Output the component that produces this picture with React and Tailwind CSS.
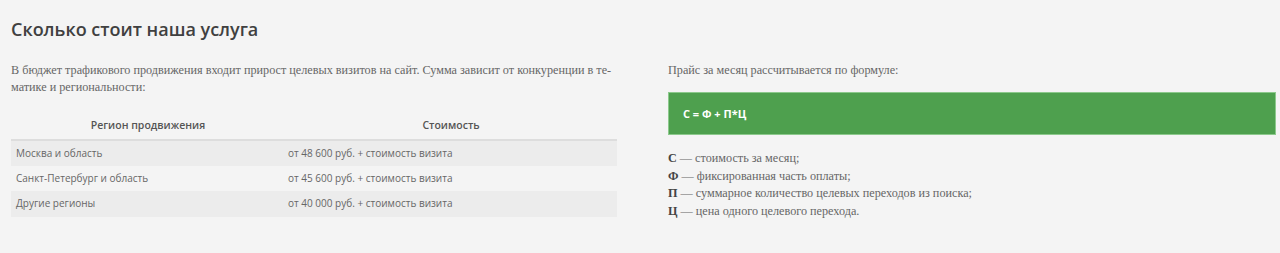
const rows = [
  { region: 'Москва и область', price: 'от 48 600 руб. + стоимость визита' },
  { region: 'Санкт-Петербург и область', price: 'от 45 600 руб. + стоимость визита' },
  { region: 'Другие регионы', price: 'от 40 000 руб. + стоимость визита' },
];

const legend = [
  { k: 'С', v: 'стоимость за месяц;' },
  { k: 'Ф', v: 'фиксированная часть оплаты;' },
  { k: 'П', v: 'суммарное количество целевых переходов из поиска;' },
  { k: 'Ц', v: 'цена одного целевого перехода.' },
];

const sans = "font-['Open_Sans',sans-serif]";
const serif = "font-['Liberation_Serif',serif]";

export default function App() {
  return (
    <div className="h-[253px] w-[1280px] bg-[#f4f4f4] overflow-hidden">
      <div className="pl-[11px] pr-[4px] pt-[17px]">
        <h2 className={`${sans} text-[18px] leading-[24px] font-semibold text-[#404040]`}>
          Сколько стоит наша услуга
        </h2>

        <div className="mt-[21px] flex gap-[51px]">
          {/* левая колонка */}
          <div className="w-[606px]">
            <p className={`${serif} whitespace-nowrap text-[12.2px] leading-[17px] text-[#666]`}>
              В бюджет трафикового продвижения входит прирост целевых визитов на сайт. Сумма зависит от конкуренции в те-
              <br />
              матике и региональности:
            </p>

            <table className={`${sans} mt-[17px] w-full border-collapse text-[10px] text-[#666]`}>
              <thead>
                <tr className="border-b-2 border-[#ddd]">
                  <th className="w-[274px] h-[27px] text-[10.5px] font-semibold text-[#555] text-center align-middle">
                    Регион продвижения
                  </th>
                  <th className="text-[10.5px] font-semibold text-[#555] text-center align-middle">Стоимость</th>
                </tr>
              </thead>
              <tbody>
                {rows.map((r, i) => (
                  <tr key={r.region} className={i % 2 === 0 ? 'bg-[#ececec]' : ''}>
                    <td className="h-[25.5px] px-[5px] align-middle">{r.region}</td>
                    <td className="px-[3px] align-middle">{r.price}</td>
                  </tr>
                ))}
              </tbody>
            </table>
          </div>

          {/* правая колонка */}
          <div className="flex-1">
            <p className={`${serif} text-[12.2px] leading-[17px] text-[#666]`}>
              Прайс за месяц рассчитывается по формуле:
            </p>

            <div className="mt-[13px] h-[43px] flex items-center px-[14px] pt-[2px] bg-[#4ea04e] border border-[#8cc98c]">
              <span className={`${sans} text-[11px] font-bold text-white`}>С = Ф + П*Ц</span>
            </div>

            <ul className={`${serif} mt-[15px] text-[12.2px] leading-[17.5px] text-[#666]`}>
              {legend.map((l) => (
                <li key={l.k}>
                  <b className="text-[#444]">{l.k}</b> — {l.v}
                </li>
              ))}
            </ul>
          </div>
        </div>
      </div>
    </div>
  );
}
